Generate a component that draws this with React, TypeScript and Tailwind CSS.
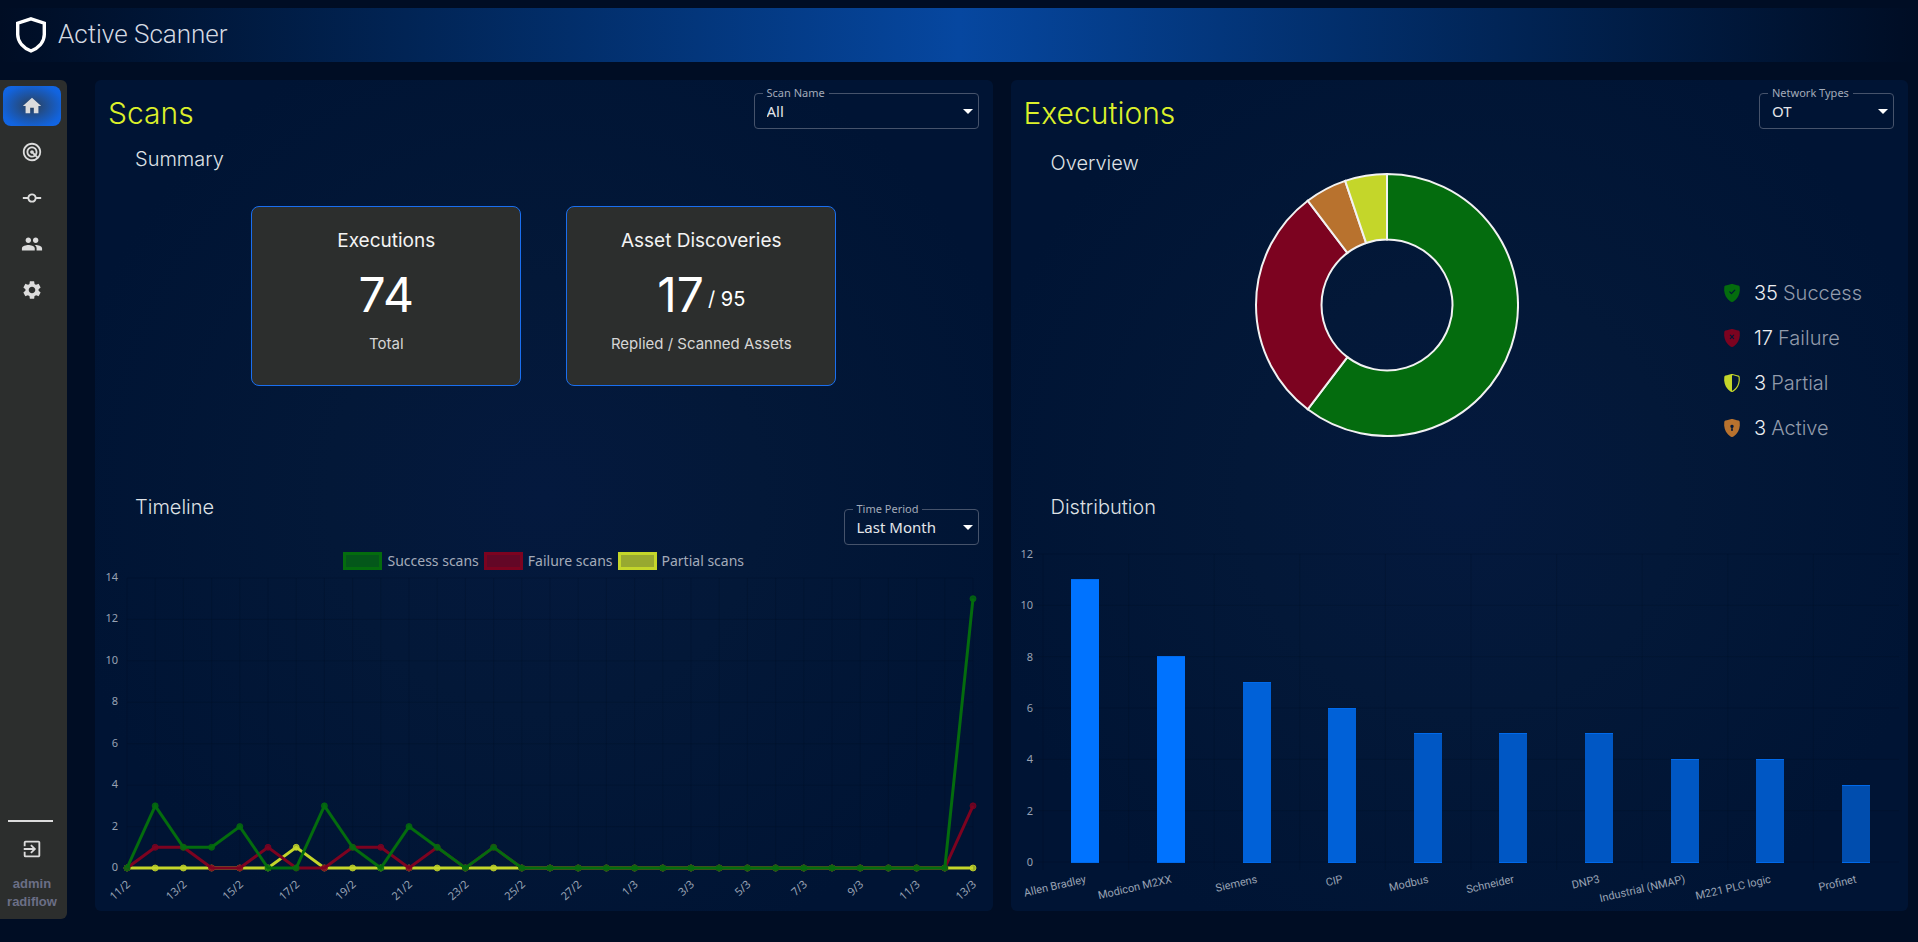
import { useLayoutEffect, useRef, useState, type ReactNode } from "react";
import {
  MdCommit,
  MdExitToApp,
  MdHome,
  MdPeople,
  MdRadar,
  MdSettings,
} from "react-icons/md";
import {
  BsShieldFillCheck,
  BsShieldFillX,
  BsShieldLockFill,
  BsShieldShaded,
} from "react-icons/bs";

const GREEN = "#046c0e";
const RED = "#7c0320";
const ORANGE = "#b8722e";
const LIME = "#c4d62a";

function useWidth(initial: number) {
  const ref = useRef<HTMLDivElement>(null);
  const [width, setWidth] = useState(initial);
  useLayoutEffect(() => {
    const el = ref.current;
    if (!el) return;
    const update = () => setWidth(el.clientWidth);
    update();
    const observer = new ResizeObserver(update);
    observer.observe(el);
    return () => observer.disconnect();
  }, []);
  return { ref, width };
}

function OutlinedSelect({
  id,
  label,
  options,
  className,
}: {
  id: string;
  label: string;
  options: string[];
  className: string;
}) {
  return (
    <fieldset
      className={`relative h-11 rounded border border-[#46536b] px-2 font-['Noto_Sans',sans-serif] ${className}`}
    >
      <legend className="h-4 px-1 text-[11px] leading-4 text-[#a3abb9]">
        <label htmlFor={id}>{label}</label>
      </legend>
      <select
        id={id}
        className="block h-5 w-full appearance-none bg-transparent px-1 text-[15px] leading-5 text-[#e4e6ea] outline-none"
      >
        {options.map((option) => (
          <option key={option} className="bg-[#001433]">
            {option}
          </option>
        ))}
      </select>
      <svg
        viewBox="0 0 10 5"
        className="pointer-events-none absolute right-[5px] top-2 h-[5px] w-[10px] fill-white"
        aria-hidden="true"
      >
        <path d="M0 0h10L5 5z" />
      </svg>
    </fieldset>
  );
}

function StatCard({ title, children, caption }: { title: string; children: ReactNode; caption: string }) {
  return (
    <article className="flex h-[180px] w-[270px] flex-col items-center rounded-lg border border-[#1a6ff0] bg-[#2c2e2d] pt-[22px] font-[Inter,sans-serif]">
      <h4 className="text-[19px] leading-6 text-[#f3f3f3]">{title}</h4>
      <p className="mt-3.5 flex h-14 items-center text-5xl leading-[56px] text-white">{children}</p>
      <p className="mt-[9px] text-[15px] leading-6 text-[#d6d6d6]">{caption}</p>
    </article>
  );
}

const timeline = {
  success: [0, 3, 1, 1, 2, 0, 0, 3, 1, 0, 2, 1, 0, 1, 0, 0, 0, 0, 0, 0, 0, 0, 0, 0, 0, 0, 0, 0, 0, 0, 13],
  failure: [0, 1, 1, 0, 0, 1, 0, 0, 1, 1, 0, 1, 0, 1, 0, 0, 0, 0, 0, 0, 0, 0, 0, 0, 0, 0, 0, 0, 0, 0, 3],
  partial: [0, 0, 0, 0, 0, 0, 1, 0, 0, 0, 0, 0, 0, 0, 0, 0, 0, 0, 0, 0, 0, 0, 0, 0, 0, 0, 0, 0, 0, 0, 0],
};
const days = timeline.success.map((_, i) => (i < 18 ? `${11 + i}/2` : `${i - 17}/3`));

function TimelineChart() {
  const { ref, width } = useWidth(897);
  const left = 32;
  const right = width - 20;
  const x = (i: number) => left + ((right - left) * i) / 30;
  const y = (v: number) => 291 - (v * 290) / 14;
  const series = [
    { name: "partial", values: timeline.partial, color: LIME },
    { name: "failure", values: timeline.failure, color: RED },
    { name: "success", values: timeline.success, color: GREEN },
  ];
  return (
    <div ref={ref}>
      <svg
        width={width}
        height={334}
        className="block overflow-visible font-['Noto_Sans',sans-serif] text-[11px]"
        role="img"
        aria-label="Scans per day"
      >
        {days.map((day, i) => (
          <g key={day}>
            <line x1={x(i)} x2={x(i)} y1={y(14)} y2={y(0)} stroke="#000" strokeOpacity="0.1" />
            {i % 2 === 0 && (
              <text transform={`translate(${x(i) + 1} 305) rotate(-42)`} textAnchor="end" dominantBaseline="central" fill="#98a2b3">
                {day}
              </text>
            )}
          </g>
        ))}
        {[0, 2, 4, 6, 8, 10, 12, 14].map((v) => (
          <g key={v}>
            <line x1={left} x2={right} y1={y(v)} y2={y(v)} stroke="#000" strokeOpacity="0.1" />
            <text x={23} y={y(v) + 3} textAnchor="end" fill="#98a2b3">
              {v}
            </text>
          </g>
        ))}
        {series.map((s) => (
          <g key={s.name}>
            <polyline
              points={s.values.map((v, i) => `${x(i)},${y(v)}`).join(" ")}
              fill="none"
              stroke={s.color}
              strokeWidth="3"
            />
            {s.values.map((v, i) => (
              <circle key={i} cx={x(i)} cy={y(v)} r="3" fill={s.color} fillOpacity="0.8" stroke={s.color} strokeOpacity="0.8" />
            ))}
          </g>
        ))}
      </svg>
    </div>
  );
}

const assets = [
  { name: "Allen Bradley", value: 11, color: "#0073ff" },
  { name: "Modicon M2XX", value: 8, color: "#0073ff" },
  { name: "Siemens", value: 7, color: "#0061d8" },
  { name: "CIP", value: 6, color: "#0061d8" },
  { name: "Modbus", value: 5, color: "#0057c4" },
  { name: "Schneider", value: 5, color: "#0057c4" },
  { name: "DNP3", value: 5, color: "#0057c4" },
  { name: "Industrial (NMAP)", value: 4, color: "#0057c4" },
  { name: "M221 PLC logic", value: 4, color: "#0057c4" },
  { name: "Profinet", value: 3, color: "#004dae" },
];

function DistributionChart() {
  const { ref, width } = useWidth(897);
  const left = 32;
  const right = width - 10;
  const slot = (right - left) / assets.length;
  const y = (v: number) => 317 - (v * 308) / 12;
  return (
    <div ref={ref}>
      <svg
        width={width}
        height={366}
        className="block font-['Noto_Sans',sans-serif] text-[11px]"
        role="img"
        aria-label="Assets by type"
      >
        {[0, 2, 4, 6, 8, 10, 12].map((v) => (
          <g key={v}>
            <line x1={left - 8} x2={right} y1={y(v)} y2={y(v)} stroke="#000" strokeOpacity="0.1" />
            <text x={22} y={y(v) + 4} textAnchor="end" fill="#98a2b3">
              {v}
            </text>
          </g>
        ))}
        {assets.map((asset, i) => {
          const center = left + slot * (i + 0.5);
          const barX = Math.floor(center - 14);
          const top = Math.floor(y(asset.value));
          return (
            <g key={asset.name}>
              <line x1={left + slot * i} x2={left + slot * i} y1={y(12)} y2={y(0) + 8} stroke="#000" strokeOpacity="0.1" />
              <rect x={barX} y={top} width="28" height={318 - top} fill={asset.color} />
              <rect x={barX} y={top} width="28" height="1" fill="#006aeb" />
              <rect x={barX} y="317" width="28" height="1" fill="#006aeb" />
              <text
                transform={`translate(${center} 334) rotate(-13)`}
                textAnchor="end"
                dominantBaseline="central"
                fill="#98a2b3"
                className="font-[Roboto,sans-serif]"
              >
                {asset.name}
              </text>
            </g>
          );
        })}
      </svg>
    </div>
  );
}

const outcomes = [
  { name: "Success", value: 35, color: GREEN },
  { name: "Failure", value: 17, color: RED },
  { name: "Active", value: 3, color: ORANGE },
  { name: "Partial", value: 3, color: LIME },
];

function arcPath(start: number, end: number) {
  const point = (r: number, t: number) => {
    const a = t * 2 * Math.PI;
    return `${132 + r * Math.sin(a)} ${132 - r * Math.cos(a)}`;
  };
  const large = end - start > 0.5 ? 1 : 0;
  return `M${point(131, start)}A131 131 0 ${large} 1 ${point(131, end)}L${point(65.5, end)}A65.5 65.5 0 ${large} 0 ${point(65.5, start)}Z`;
}

function Donut() {
  const total = outcomes.reduce((sum, o) => sum + o.value, 0);
  let used = 0;
  return (
    <svg viewBox="0 0 264 264" className="size-[264px]" role="img" aria-label="Executions by result">
      {outcomes.map((o) => {
        const start = used / total;
        used += o.value;
        return <path key={o.name} d={arcPath(start, used / total)} fill={o.color} stroke="#f2f2f2" strokeWidth="2" />;
      })}
    </svg>
  );
}

const legend = [
  { name: "Success", value: 35, Icon: BsShieldFillCheck, tone: "text-[#046c0e]" },
  { name: "Failure", value: 17, Icon: BsShieldFillX, tone: "text-[#7c0320]" },
  { name: "Partial", value: 3, Icon: BsShieldShaded, tone: "text-[#c4d62a]" },
  { name: "Active", value: 3, Icon: BsShieldLockFill, tone: "text-[#b8722e]" },
];

const nav = [
  { name: "Home", Icon: MdHome, active: true },
  { name: "Scans", Icon: MdRadar, active: false },
  { name: "Timeline", Icon: MdCommit, active: false },
  { name: "Users", Icon: MdPeople, active: false },
  { name: "Settings", Icon: MdSettings, active: false },
];

const seriesLegend = [
  { name: "Success scans", box: "border-[#046c0e] bg-[#04571a]" },
  { name: "Failure scans", box: "border-[#7c0320] bg-[#630726]" },
  { name: "Partial scans", box: "border-[#c4d62a] bg-[#98a930]" },
];

const panel =
  "min-w-0 flex-1 rounded-md bg-[radial-gradient(circle_at_center,#04193e_0%,#031838_35%,#001434_80%)]";
const panelTitle = "pt-2 font-[Inter,sans-serif] text-[30px] leading-[40px] font-light text-[#dcf02a]";
const sectionTitle = "font-[Inter,sans-serif] text-xl leading-6 font-light text-[#dfe1e5]";

export default function App() {
  return (
    <div className="flex min-h-screen flex-col bg-[#000d24] pt-2">
      <header className="flex h-[54px] items-center gap-[11px] bg-linear-to-r from-[#000d24] via-[#0647a0] to-[#000d24] pl-[15px]">
        <svg viewBox="0 0 32 36" className="h-9 w-8" fill="none" stroke="#fff" strokeWidth="3.4" aria-hidden="true">
          <path d="M16 1.9 29.3 6.2V17.5C29.3 25.2 23.2 31 16 34 8.800 31 2.700 25.200 2.700 17.500V6.200Z" />
        </svg>
        <h1 className="pb-0.5 font-[Roboto,sans-serif] text-[26px] leading-8 font-light text-[#d5dae2]">Active Scanner</h1>
      </header>

      <div className="mt-[18px] flex flex-1 pb-[23px]">
        <nav className="mr-7 flex w-[67px] shrink-0 flex-col rounded-r-md bg-[#2c2e2d] pt-1.5 pr-1.5 pl-[3px]">
          <ul className="flex flex-col gap-1.5">
            {nav.map(({ name, Icon, active }) => (
              <li key={name}>
                <a
                  href={`#${name.toLowerCase()}`}
                  aria-label={name}
                  className={`flex h-10 items-center justify-center rounded-lg text-[#dcdcdc] ${
                    active ? "bg-[radial-gradient(ellipse_at_center,#2c4058_0%,#1263dc_75%,#1068ee_100%)]" : ""
                  }`}
                >
                  <Icon size={22} />
                </a>
              </li>
            ))}
          </ul>
          <div className="mt-auto flex flex-col items-center pb-2">
            <hr className="ml-[5px] w-[45px] self-start border-t-2 border-[#dcdcdc]" />
            <button type="button" aria-label="Log out" className="mt-[7px] flex size-10 items-center justify-center text-[#dcdcdc]">
              <MdExitToApp size={22} />
            </button>
            <p className="mt-1.5 text-center font-['Liberation_Sans',sans-serif] text-[13px] leading-[18px] font-bold text-[#6b6f86]">
              admin
              <br />
              radiflow
            </p>
          </div>
        </nav>

        <main className="flex min-w-0 flex-1 items-start gap-[18px] pr-2.5">
          <section className={panel}>
            <div className="flex h-[60px] items-start justify-between pt-[5px] pr-3.5 pl-[13px]">
              <h2 className={panelTitle}>Scans</h2>
              <OutlinedSelect id="scan-name" label="Scan Name" options={["All"]} className="w-[225px]" />
            </div>
            <div className="h-[340px] pt-[7px]">
              <h3 className={`pl-10 ${sectionTitle}`}>Summary</h3>
              <div className="mt-[35px] flex justify-center gap-[45px]">
                <StatCard title="Executions" caption="Total">
                  74
                </StatCard>
                <StatCard title="Asset Discoveries" caption="Replied / Scanned Assets">
                  17<span className="ml-1 pt-2 text-xl leading-6">/ 95</span>
                </StatCard>
              </div>
            </div>
            <div className="flex h-[65px] items-end justify-between pr-3.5 pl-10">
              <h3 className={`mb-[26px] ${sectionTitle}`}>Timeline</h3>
              <OutlinedSelect id="time-period" label="Time Period" options={["Last Month"]} className="w-[135px]" />
            </div>
            <ul className="flex h-8 items-center justify-center gap-[5px] font-['Noto_Sans',sans-serif] text-sm leading-4 text-[#a3abb9]">
              {seriesLegend.map(({ name, box }) => (
                <li key={name} className="flex items-center gap-[5px]">
                  <span className={`h-[18px] w-[39px] border-3 ${box}`} />
                  {name}
                </li>
              ))}
            </ul>
            <TimelineChart />
          </section>

          <section className={panel}>
            <div className="flex h-[60px] items-start justify-between pt-[5px] pr-3.5 pl-[13px]">
              <h2 className={panelTitle}>Executions</h2>
              <OutlinedSelect id="network-types" label="Network Types" options={["OT"]} className="w-[135px]" />
            </div>
            <div className="h-[340px] pt-[11px] pl-10">
              <h3 className={sectionTitle}>Overview</h3>
              <div className="-mt-0.5 flex h-[277px]">
                <div className="flex flex-1 items-start justify-center">
                  <Donut />
                </div>
                <ul className="w-[185px] self-end font-[Inter,sans-serif] text-xl leading-6 font-light">
                  {legend.map(({ name, value, Icon, tone }) => (
                    <li key={name} className="flex h-[45px] items-center text-[#929bab]">
                      <Icon size={18} className={`mr-[13px] ${tone}`} />
                      <span className="mr-[5px] text-[#eceef1]">{value}</span>
                      {name}
                    </li>
                  ))}
                </ul>
              </div>
            </div>
            <div className="flex h-[65px] items-end pl-10">
              <h3 className={`mb-[26px] ${sectionTitle}`}>Distribution</h3>
            </div>
            <DistributionChart />
          </section>
        </main>
      </div>
    </div>
  );
}
